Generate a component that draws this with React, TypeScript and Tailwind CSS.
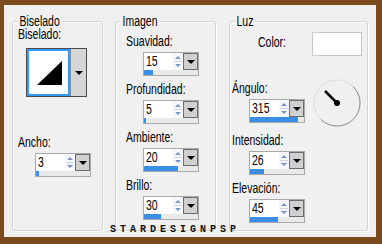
import type { ReactNode } from "react";

// the dialog font is tall and narrow, so text is squeezed horizontally
function Txt({ children, className = "" }: { children: ReactNode; className?: string }) {
  return <span className={`block origin-left scale-x-[0.75] whitespace-nowrap ${className}`}>{children}</span>;
}

type SpinProps = { value: number; fill: number };

// numeric field with spinner, dropdown button and range bar underneath
function Spin({ value, fill }: SpinProps) {
  return (
    <div className="w-[56px] border border-[#a9a9a9] bg-white flex flex-col">
      <div className="flex h-[17px]">
        <div className="flex-1 pl-[2px] overflow-hidden">
          <Txt className="leading-[17px]">{value}</Txt>
        </div>
        <div className="w-[10px] flex flex-col items-center justify-center gap-[2px] bg-[#f5f7fc]">
          <span className="w-0 h-0 border-x-[3px] border-x-transparent border-b-[3px] border-b-[#7b8fc9]" />
          <span className="w-[8px] h-px bg-[#cbd3ea]" />
          <span className="w-0 h-0 border-x-[3px] border-x-transparent border-t-[3px] border-t-[#7b8fc9]" />
        </div>
        <div className="w-[15px] border border-[#6d6d6d] bg-[#d0d0d0] flex items-center justify-center">
          <span className="w-0 h-0 border-x-[4px] border-x-transparent border-t-[4px] border-t-black" />
        </div>
      </div>
      <div className="h-[5px] bg-[#e9e9e9]">
        <div className="h-full bg-[#3a8ee6]" style={{ width: fill }} />
      </div>
    </div>
  );
}

function Group({ title, className, children }: { title: string; className: string; children: ReactNode }) {
  return (
    <div className={`relative border border-[#d3d3d3] rounded-[3px] shadow-[inset_1px_1px_0_#fff,1px_1px_0_#fff] ${className}`}>
      <span className="absolute -top-[6px] left-[5px] px-[2px] bg-[#f0f0f0] leading-[11px] origin-left scale-x-[0.75] whitespace-nowrap">
        {title}
      </span>
      {children}
    </div>
  );
}

function Field({ label, value, fill, className = "" }: { label: string; value: number; fill: number; className?: string }) {
  return (
    <div className={`flex flex-col w-[73px] ${className}`}>
      <Txt className="leading-[16px]">{label}</Txt>
      <div className="mt-[3px] ml-[17px]">
        <Spin value={value} fill={fill} />
      </div>
    </div>
  );
}

function Dial() {
  return (
    <svg width="48" height="48" viewBox="0 0 48 48">
      <circle cx="24" cy="24" r="23" fill="none" stroke="#dcdcdc" />
      <path d="M 7.7 40.3 A 23 23 0 0 0 40.3 7.7" fill="none" stroke="#8c8c8c" />
      <line x1="12" y1="12" x2="24" y2="24" stroke="black" strokeWidth="2.5" />
      <circle cx="24" cy="24" r="3" fill="black" />
    </svg>
  );
}

export default function App() {
  return (
    <div className="w-[382px] h-[244px] bg-[#7b4a1d] pt-[5px] pl-[4px] pr-[6px] pb-[7px] text-[14px] text-black font-['Liberation_Sans',Arial,sans-serif]">
      <div className="relative h-full bg-[#f0f0f0] flex pt-[16px] pb-[6px] pl-[8px]">
        <Group title="Biselado" className="w-[91px] pt-[5px] pl-[5px]">
          <Txt className="leading-[14px]">Biselado:</Txt>
          {/* bevel preview picker */}
          <div className="mt-[7px] ml-[8px] w-[61px] h-[49px] flex border border-[#4a4a4a] bg-white">
            <div className="w-[43px] border-2 border-[#3399ff]">
              <svg width="39" height="45" viewBox="0 0 39 45">
                <polygon points="8,34 33,10 33,34" fill="black" />
              </svg>
            </div>
            <div className="flex-1 bg-[#d6d6d6] border-l border-[#8a8a8a] flex items-center justify-center">
              <span className="w-0 h-0 border-x-[4px] border-x-transparent border-t-[4px] border-t-black" />
            </div>
          </div>
          <Field label="Ancho:" value={3} fill={3} className="mt-[37px]" />
        </Group>

        <Group title="Imagen" className="w-[101px] ml-[12px] pt-[11px] pl-[10px]">
          <div className="flex flex-col gap-[5px]">
            <Field label="Suavidad:" value={15} fill={9} />
            <Field label="Profundidad:" value={5} fill={2} />
            <Field label="Ambiente:" value={20} fill={34} />
            <Field label="Brillo:" value={30} fill={17} />
          </div>
        </Group>

        <Group title="Luz" className="w-[139px] ml-[13px] pt-[10px] pl-[2px]">
          <div className="flex items-start">
            <div className="ml-[26px] mt-[2px] w-[54px]">
              <Txt className="leading-[16px]">Color:</Txt>
            </div>
            <div className="w-[50px] h-[24px] bg-white border border-[#c9c9c9]" />
          </div>
          <div className="flex items-start mt-[24px]">
            <Field label="Ángulo:" value={315} fill={48} />
            <div className="ml-[8px] -mt-px">
              <Dial />
            </div>
          </div>
          <div className="flex flex-col gap-[5px] mt-[5px]">
            <Field label="Intensidad:" value={26} fill={14} />
            <Field label="Elevación:" value={45} fill={28} />
          </div>
        </Group>

        <span className="absolute left-[106px] top-[220px] font-['Liberation_Mono',monospace] font-bold text-[10px] leading-[10px] tracking-[4px] text-[#111]">
          STARDESIGNPSP
        </span>
      </div>
    </div>
  );
}
